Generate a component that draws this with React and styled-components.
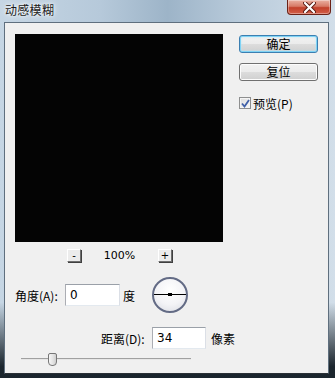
import React from "react";
import styled, { createGlobalStyle } from "styled-components";

const Global = createGlobalStyle`
  html, body { margin: 0; padding: 0; background: #1c2630; }
  * { box-sizing: border-box; }
`;

const cjk = `"Noto Sans CJK SC", "Noto Sans", sans-serif`;

const Window = styled.div`
  width: 335px;
  height: 378px;
  padding: 0 6px 4px 4px;
  display: flex;
  flex-direction: column;
  font-family: ${cjk};
  font-size: 12px;
  color: #000;
  background:
    linear-gradient(to bottom, rgba(0,0,0,0) 0%, rgba(0,0,0,0) 80%, rgba(18,28,36,0.95) 97%),
    linear-gradient(to right, #c6d6e4 0%, #b6c9da 30%, #9db4c8 50%, #b9cbdb 72%, #d2dee9 100%);
`;

const TitleBar = styled.div`
  height: 22px;
  position: relative;
  display: flex;
  align-items: flex-start;
`;

const Title = styled.span`
  margin: 2px 0 0 1px;
  font-size: 12px;
  letter-spacing: 0.3px;
  line-height: 16px;
  color: #1a1a1a;
  text-shadow: 0 0 6px #fff, 0 0 3px #fff;
`;

const CloseBtn = styled.div`
  position: absolute;
  right: -2px;
  top: 0;
  width: 44px;
  height: 15px;
  border: 1px solid #6b2217;
  border-top: none;
  border-radius: 0 0 4px 4px;
  background: linear-gradient(#eab1a2 0%, #d77a66 45%, #c2402a 55%, #d3604a 100%);
  box-shadow: inset 0 0 0 1px rgba(255,255,255,0.35);
  display: flex;
  align-items: center;
  justify-content: center;
`;

const Client = styled.div`
  flex: 1;
  background: #f0f0f0;
  border: 1px solid #5f6f7e;
  border-bottom-color: #2a3036;
  display: flex;
  flex-direction: column;
`;

const TopRow = styled.div`
  display: flex;
  align-items: flex-start;
  padding: 11px 0 0 10px;
`;

const Preview = styled.div`
  width: 208px;
  height: 208px;
  background: #040404;
`;

const Side = styled.div`
  margin-left: 16px;
  padding-top: 1px;
  display: flex;
  flex-direction: column;
`;

const Button = styled.div`
  width: 79px;
  height: 18px;
  margin-top: ${(p) => p.$top || 0}px;
  border: 1px solid ${(p) => (p.$default ? "#3c7fb1" : "#707070")};
  border-radius: 3px;
  background: linear-gradient(#f2f2f2 0%, #ebebeb 50%, #dddddd 50%, #cfcfcf 100%);
  box-shadow: ${(p) =>
    p.$default ? "inset 0 0 0 1px #7fd3f5, inset 0 0 2px 1px #b5e7fa" : "inset 0 0 0 1px #fcfcfc"};
  display: flex;
  align-items: center;
  justify-content: center;
  line-height: 1;
`;

const CheckRow = styled.div`
  margin-top: 15px;
  display: flex;
  align-items: center;
  height: 14px;
`;

const CheckBox = styled.div`
  width: 12px;
  height: 12px;
  border: 1px solid #8e8f8f;
  background: linear-gradient(135deg, #dcdcdc, #f8f8f8);
  box-shadow: inset 0 0 0 1px #f4f4f4;
  display: flex;
  align-items: center;
  justify-content: center;
  margin-right: 2px;
`;

const ZoomBar = styled.div`
  margin-top: 7px;
  padding-left: 62px;
  height: 13px;
  display: flex;
  align-items: center;
`;

const ZoomBox = styled.div`
  width: 14px;
  height: 13px;
  border-top: 1px solid #ffffff;
  border-left: 1px solid #ffffff;
  border-right: 1px solid #6e6e6e;
  border-bottom: 1px solid #6e6e6e;
  background: #ececec;
  box-shadow: 1px 1px 0 #404040;
  display: flex;
  align-items: center;
  justify-content: center;
  font-family: "DejaVu Sans", sans-serif;
  font-size: 10px;
  line-height: 1;
`;

const ZoomText = styled.span`
  width: 77px;
  text-align: center;
  font-family: "DejaVu Sans", sans-serif;
  font-size: 11px;
`;

const AngleRow = styled.div`
  margin-top: 15px;
  height: 36px;
  padding-left: 10px;
  display: flex;
  align-items: center;
`;

const Label = styled.span`
  white-space: nowrap;
  width: ${(p) => p.$w}px;
`;

const Field = styled.div`
  width: ${(p) => p.$w}px;
  height: 22px;
  background: #fff;
  border: 1px solid #abadb3;
  border-top-color: #9aa0a8;
  border-right-color: #dbdfe6;
  border-bottom-color: #e3e9ef;
  padding-left: 4px;
  display: flex;
  align-items: center;
  font-family: "DejaVu Sans", sans-serif;
  font-size: 12px;
`;

const Unit = styled.span`
  margin-left: ${(p) => p.$gap || 3}px;
`;

const Dial = styled.div`
  margin-left: 17px;
  width: 36px;
  height: 36px;
  border-radius: 50%;
  border: 2px solid #636b85;
  background: radial-gradient(circle at 50% 35%, #ffffff 0%, #f3f3f6 55%, #d9dbe2 100%);
  position: relative;
  &::before {
    content: "";
    position: absolute;
    left: 0;
    right: 0;
    top: 15px;
    height: 1px;
    background: #000;
  }
  &::after {
    content: "";
    position: absolute;
    left: 14px;
    top: 14px;
    width: 4px;
    height: 3px;
    background: #000;
  }
`;

const DistanceRow = styled.div`
  margin-top: 14px;
  height: 22px;
  padding-left: 96px;
  display: flex;
  align-items: center;
`;

const Slider = styled.div`
  margin: 4px 0 0 16px;
  width: 170px;
  height: 13px;
  position: relative;
`;

const Track = styled.div`
  position: absolute;
  left: 0;
  right: 0;
  top: 5px;
  height: 2px;
  border-top: 1px solid #a0a0a0;
  border-bottom: 1px solid #e6e6e6;
`;

const Thumb = styled.div`
  position: absolute;
  left: 27px;
  top: 0;
  width: 9px;
  height: 13px;
  border: 1px solid #777;
  border-radius: 2px 2px 4px 4px;
  background: linear-gradient(to right, #f6f6f6, #e2e2e2 60%, #cfcfcf);
`;

export default function App() {
  return (
    <>
      <Global />
      <Window>
        <TitleBar>
          <Title>动感模糊</Title>
          <CloseBtn>
            <svg width="13" height="11" viewBox="0 0 13 11">
              <path d="M2 1 L11 10 M11 1 L2 10" stroke="#5a1a12" strokeWidth="4" strokeLinecap="round" />
              <path d="M2 1 L11 10 M11 1 L2 10" stroke="#fff" strokeWidth="2.2" strokeLinecap="round" />
            </svg>
          </CloseBtn>
        </TitleBar>
        <Client>
          <TopRow>
            <Preview />
            <Side>
              <Button $default>确定</Button>
              <Button $top={10}>复位</Button>
              <CheckRow>
                <CheckBox>
                  <svg width="9" height="9" viewBox="0 0 9 9">
                    <path d="M1 4.5 L3.5 7.5 L8 1" fill="none" stroke="#4060a8" strokeWidth="1.8" />
                  </svg>
                </CheckBox>
                <span>预览(P)</span>
              </CheckRow>
            </Side>
          </TopRow>
          <ZoomBar>
            <ZoomBox>-</ZoomBox>
            <ZoomText>100%</ZoomText>
            <ZoomBox>+</ZoomBox>
          </ZoomBar>
          <AngleRow>
            <Label $w={50}>角度(A):</Label>
            <Field $w={55}>0</Field>
            <Unit>度</Unit>
            <Dial />
          </AngleRow>
          <DistanceRow>
            <Label $w={51}>距离(D):</Label>
            <Field $w={54}>34</Field>
            <Unit $gap={5}>像素</Unit>
          </DistanceRow>
          <Slider>
            <Track />
            <Thumb />
          </Slider>
        </Client>
      </Window>
    </>
  );
}
